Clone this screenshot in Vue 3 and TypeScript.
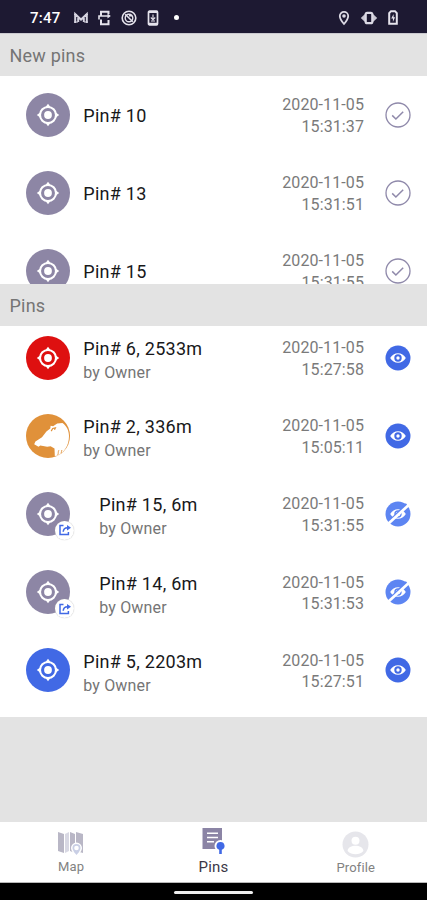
<script setup lang="ts">
interface Pin {
  name: string
  date: string
  time: string
  color: string
  boar?: boolean
  shared?: boolean
  hidden?: boolean
}

const newPins: Pin[] = [
  { name: 'Pin# 10', date: '2020-11-05', time: '15:31:37', color: 'gray' },
  { name: 'Pin# 13', date: '2020-11-05', time: '15:31:51', color: 'gray' },
  { name: 'Pin# 15', date: '2020-11-05', time: '15:31:55', color: 'gray' },
]

const pins: Pin[] = [
  { name: 'Pin# 6, 2533m', date: '2020-11-05', time: '15:27:58', color: 'red' },
  { name: 'Pin# 2, 336m', date: '2020-11-05', time: '15:05:11', color: 'orange', boar: true },
  { name: 'Pin# 15, 6m', date: '2020-11-05', time: '15:31:55', color: 'gray', shared: true, hidden: true },
  { name: 'Pin# 14, 6m', date: '2020-11-05', time: '15:31:53', color: 'gray', shared: true, hidden: true },
  { name: 'Pin# 5, 2203m', date: '2020-11-05', time: '15:27:51', color: 'blue' },
]
</script>

<template>
  <div class="screen">
    <svg class="defs" width="0" height="0" aria-hidden="true">
      <symbol id="target" viewBox="0 0 44 44">
        <circle cx="22" cy="22" r="8" fill="none" stroke="#fff" stroke-width="2.1" />
        <circle cx="22" cy="22" r="3.9" fill="#fff" />
        <path d="M22 10.8l3 4h-6zM22 33.2l3-4h-6zM10.8 22l4-3v6zM33.2 22l-4-3v6z" fill="#fff" />
      </symbol>
      <symbol id="boar" viewBox="0 0 44 44">
        <path d="M8.2 30.3 9.4 27.5 16 23.2 20.4 17.4 24.3 14.4 24.6 11.8 27.1 12.3 31.2 9.6 36.5 8.9C41 12 43 17 43 22 43 31.5 38.2 38.8 31 41.8L28.8 42 28.5 34.5 24.6 32.3 21.2 32.7 14.3 31.4 12.5 32.7z" fill="#fff" />
        <path d="M25.2 17.1 26.7 14.5 29.4 13.8 28.5 15.8" fill="none" stroke="#e0913a" stroke-width="1.2" />
        <path d="M31.8 41c.8-2 .1-3.2 1.1-4.8M35.1 39.4c.6-1.2.1-2.5.8-3.4" fill="none" stroke="#e0913a" stroke-width=".9" />
      </symbol>
    </svg>

    <header class="status">
      <span class="clock">7:47</span>
      <svg class="s-icon" width="16" height="14" viewBox="0 0 16 14" fill="none" stroke="#d5d3df">
        <path d="M2.2 12V3L8 8.5 13.8 3v9M5.2 11V7M10.8 11V7" stroke-width="2" />
        <path d="M1 3.5h3M12 3.5h3M1 11h4M11 11h4" stroke-width="1.2" />
      </svg>
      <svg class="s-icon second" width="14" height="16" viewBox="0 0 14 16" fill="none" stroke="#e5e3ec">
        <path d="M3 6V1.8h7.5V4M3 9.5v4.7h7.5V10" stroke-width="2" />
        <path d="M1 9.4V6h10.5" stroke-width="1.6" />
        <path d="M9.5 3.4L12.8 6 9.5 8.6z" fill="#e5e3ec" stroke="none" />
      </svg>
      <svg class="s-icon third" width="16" height="16" viewBox="0 0 16 16" fill="none" stroke="#e5e3ec">
        <circle cx="8" cy="8" r="6.8" stroke-width="1.6" />
        <circle cx="8" cy="8" r="3.8" stroke-width="1.4" />
        <path d="M4.2 4.2l7.6 7.6M8 5.8h3.2" stroke-width="1.5" />
      </svg>
      <svg class="s-icon fourth" width="12" height="16" viewBox="0 0 12 16" fill="none" stroke="#e5e3ec">
        <rect x="1.5" y="1.2" width="9" height="13.6" rx="1" stroke-width="1.7" />
        <path d="M2 2.1h8M2 13.7h8" stroke-width="2" />
        <path d="M6 4.5v5M3.8 7.5L6 9.8l2.2-2.3M4 11h4" stroke-width="1.1" />
      </svg>
      <i class="dot"></i>
      <span class="grow"></span>
      <svg class="s-icon" width="12" height="16" viewBox="0 0 12 16">
        <path d="M6 1.8a4.2 4.2 0 0 0-4.2 4.2C1.8 9.2 6 14 6 14s4.2-4.8 4.2-8A4.2 4.2 0 0 0 6 1.8z" fill="none" stroke="#dcdae5" stroke-width="1.8" />
        <circle cx="6" cy="6" r="1.8" fill="#dcdae5" />
      </svg>
      <svg class="s-icon vibrate" width="18" height="14" viewBox="0 0 18 14">
        <path d="M5 3L.8 7 5 11zM13 3l4.2 4-4.2 4z" fill="#c9c7d3" />
        <rect x="5.7" y="1.8" width="6.6" height="10.4" rx="1.5" fill="#1d1932" stroke="#dcdae5" stroke-width="2.2" />
      </svg>
      <svg class="s-icon battery" width="10" height="15" viewBox="0 0 10 15">
        <path d="M1.2 3.2 3 1.2h4l1.8 2v10.6H1.2z" fill="#1d1932" stroke="#e5e3ec" stroke-width="2" />
        <path d="M5.6 4L3.2 8.5h1.7V12l2.2-4.8H5.6z" fill="#e5e3ec" />
      </svg>
    </header>

    <h2 class="heading first">New pins</h2>
    <ul class="list new">
      <li v-for="pin in newPins" :key="pin.name" class="row">
        <div class="avatar" :class="pin.color"><svg width="44" height="44"><use href="#target" /></svg></div>
        <div class="info"><div class="name">{{ pin.name }}</div></div>
        <div class="when"><div>{{ pin.date }}</div><div>{{ pin.time }}</div></div>
        <svg class="action" width="26" height="26" viewBox="0 0 26 26" fill="none" stroke="#8f89aa">
          <circle cx="13" cy="13" r="12" stroke-width="1.3" />
          <path d="M7.2 13.4l3.7 3.6 7.3-7.3" stroke-width="1.5" />
        </svg>
      </li>
    </ul>

    <h2 class="heading">Pins</h2>
    <ul class="list">
      <li v-for="pin in pins" :key="pin.name" class="row">
        <div class="avatar" :class="pin.color">
          <svg width="44" height="44"><use :href="pin.boar ? '#boar' : '#target'" /></svg>
          <span v-if="pin.shared" class="badge">
            <svg width="14" height="14" viewBox="0 0 14 14" fill="none" stroke="#4169e5">
              <path d="M5.5 2.5H2v9h8.4V9" stroke-width="1.5" />
              <path d="M5.2 8.8C5.4 6 6.8 4.7 9.5 4.7" stroke-width="1.5" />
              <path d="M9 2l4 2.8-4 2.7z" fill="#4169e5" stroke="none" />
            </svg>
          </span>
        </div>
        <div class="info double" :class="{ inset: pin.shared }">
          <div class="name">{{ pin.name }}</div>
          <div class="owner">by Owner</div>
        </div>
        <div class="when"><div>{{ pin.date }}</div><div>{{ pin.time }}</div></div>
        <svg class="action" width="26" height="26" viewBox="0 0 26 26">
          <circle cx="13" cy="13" r="12.5" :fill="pin.hidden ? '#5d85f2' : '#4169e5'" />
          <path d="M5.2 13C8.5 6.6 17.5 6.6 20.8 13 17.5 19.4 8.5 19.4 5.2 13z" fill="#fff" />
          <circle cx="13" cy="13" r="3" :fill="pin.hidden ? '#fff' : '#4169e5'" :stroke="pin.hidden ? '#5d85f2' : '#4169e5'" stroke-width="1.4" />
          <circle cx="13" cy="13" r="1.7" fill="#fff" />
          <template v-if="pin.hidden">
            <path d="M4 20.5L21.5 3" stroke="#5d85f2" stroke-width="1.8" />
            <path d="M3 23L24 3.7" stroke="#fff" stroke-width="2.7" />
          </template>
        </svg>
      </li>
    </ul>
    <div class="blank"></div>

    <nav class="tabs">
      <div class="tab map">
        <svg width="30" height="26" viewBox="0 0 30 26">
          <path d="M2 2l6 2v19l-6-2zM20 2l7 2v19l-7-2z" fill="#b9b7c6" />
          <path d="M9 4l4-2v19l-4 2z" fill="#d8d8e3" />
          <path d="M14 2l5 2v19l-5-2z" fill="#b9b7c6" />
          <path d="M20.5 12.6a5.5 5.5 0 0 0-5.5 5.5c0 4 5.5 8 5.5 8s5.5-4 5.5-8a5.5 5.5 0 0 0-5.5-5.5z" fill="#fff" />
          <path d="M20.5 14a4 4 0 0 0-4 4c0 3 4 7 4 7s4-4 4-7a4 4 0 0 0-4-4z" fill="#c9cfe5" />
          <circle cx="20.5" cy="18" r="2.3" fill="#fff" />
        </svg>
        <span>Map</span>
      </div>
      <div class="tab active">
        <svg width="26" height="28" viewBox="0 0 26 28">
          <path d="M2.5 1H22v21H2.5z" fill="#8b84a5" />
          <path d="M7 6.2h11M7 10.5h11M7 14.7h7" stroke="#fff" stroke-width="1.5" />
          <circle cx="20.5" cy="19" r="6" fill="#fff" />
          <path d="M20.5 15a4 4 0 0 0-1.3 7.8V27h2.6v-4.2A4 4 0 0 0 20.5 15z" fill="#4169e5" />
        </svg>
        <span>Pins</span>
      </div>
      <div class="tab">
        <svg width="27" height="27" viewBox="0 0 27 27">
          <circle cx="13.5" cy="13.5" r="13" fill="#e6e6eb" />
          <circle cx="13.5" cy="9.7" r="4" fill="#fff" />
          <path d="M5.6 20c0-3.5 4.2-5.2 7.9-5.2s7.9 1.7 7.9 5.2c-3.8 4.4-12 4.4-15.8 0z" fill="#fff" />
        </svg>
        <span>Profile</span>
      </div>
    </nav>
    <footer class="system"><i class="pill"></i></footer>
  </div>
</template>

<style>
body {
  margin: 0;
}
</style>

<style scoped>
.screen {
  width: 427px;
  height: 900px;
  display: flex;
  flex-direction: column;
  overflow: hidden;
  background: #fff;
  color: #18181a;
  font-family: Roboto, "Liberation Sans", sans-serif;
}
.defs {
  display: none;
}
.status {
  box-sizing: border-box;
  height: 33px;
  flex: none;
  display: flex;
  align-items: center;
  padding: 2px 29px 0 30px;
  background: #1d1932;
}
.clock {
  width: 42.5px;
  color: #fff;
  font-size: 15px;
  font-weight: 500;
  line-height: 18px;
  letter-spacing: 0.25px;
}
.s-icon {
  flex: none;
}
.second {
  margin-left: 9px;
}
.third {
  margin-left: 9px;
}
.fourth {
  margin-left: 10px;
}
.dot {
  width: 5px;
  height: 5px;
  margin-left: 15px;
  border-radius: 50%;
  background: #fff;
}
.grow {
  flex: 1;
}
.vibrate {
  margin-left: 10px;
}
.battery {
  margin-left: 10px;
}
.heading {
  box-sizing: border-box;
  flex: none;
  height: 42px;
  margin: 0;
  padding-left: 9.5px;
  background: #e3e3e3;
  color: #757575;
  font-size: 18px;
  font-weight: 400;
  line-height: 44px;
  letter-spacing: 0.2px;
}
.first {
  height: 43px;
  border-top: 1px solid #cac9cf;
  line-height: 43px;
}
.list {
  flex: none;
  height: 391px;
  margin: 0;
  padding: 0;
  overflow: hidden;
  list-style: none;
}
.new {
  height: 208px;
}
.row {
  box-sizing: border-box;
  height: 78.2px;
  display: flex;
  align-items: center;
  padding: 9.5px 16px 24.7px 26.3px;
}
.new .row {
  padding-top: 16.6px;
  padding-bottom: 17.6px;
}
.avatar {
  position: relative;
  width: 44px;
  height: 44px;
  flex: none;
  border-radius: 50%;
}
.avatar > svg {
  display: block;
}
.gray {
  background: #8d86a5;
}
.red {
  background: #de1010;
}
.orange {
  background: #e0913a;
}
.blue {
  background: #4169e5;
}
.badge {
  position: absolute;
  left: 29px;
  top: 29px;
  width: 19px;
  height: 19px;
  display: grid;
  place-items: center;
  border-radius: 50%;
  background: #fff;
  box-shadow: 0 0 1px #aaa;
}
.info {
  flex: 1;
  margin-left: 13px;
  padding-top: 3px;
}
.double {
  padding-top: 6px;
}
.inset {
  margin-left: 29px;
}
.name {
  font-size: 18px;
  line-height: 24px;
  letter-spacing: 0.27px;
  white-space: nowrap;
}
.owner {
  color: #757575;
  font-size: 16px;
  line-height: 23px;
  letter-spacing: 0.15px;
}
.when {
  margin-right: 21px;
  padding-top: 2px;
  color: #7a7a7a;
  font-size: 16px;
  line-height: 21.5px;
  letter-spacing: 0.1px;
  text-align: right;
}
.action {
  flex: none;
}
.blank {
  flex: none;
  height: 105px;
  background: #e3e3e3;
}
.tabs {
  box-sizing: border-box;
  height: 61px;
  flex: none;
  display: grid;
  grid-template-columns: 1fr 1fr 1fr;
  border-bottom: 1px solid #b8b8b8;
}
.tab {
  display: flex;
  flex-direction: column;
  align-items: center;
  padding-top: 8.5px;
  color: #828282;
  font-size: 13px;
  line-height: 20px;
  letter-spacing: 0.15px;
}
.map {
  padding-top: 8px;
  line-height: 22px;
}
.active {
  padding-top: 5px;
  color: #3b3746;
  font-size: 15px;
  line-height: 24px;
}
.system {
  flex: 1;
  display: flex;
  justify-content: center;
  align-items: flex-start;
  background: #000;
}
.pill {
  width: 79px;
  height: 3px;
  margin-top: 8px;
  border-radius: 2px;
  background: #eee;
}
</style>
